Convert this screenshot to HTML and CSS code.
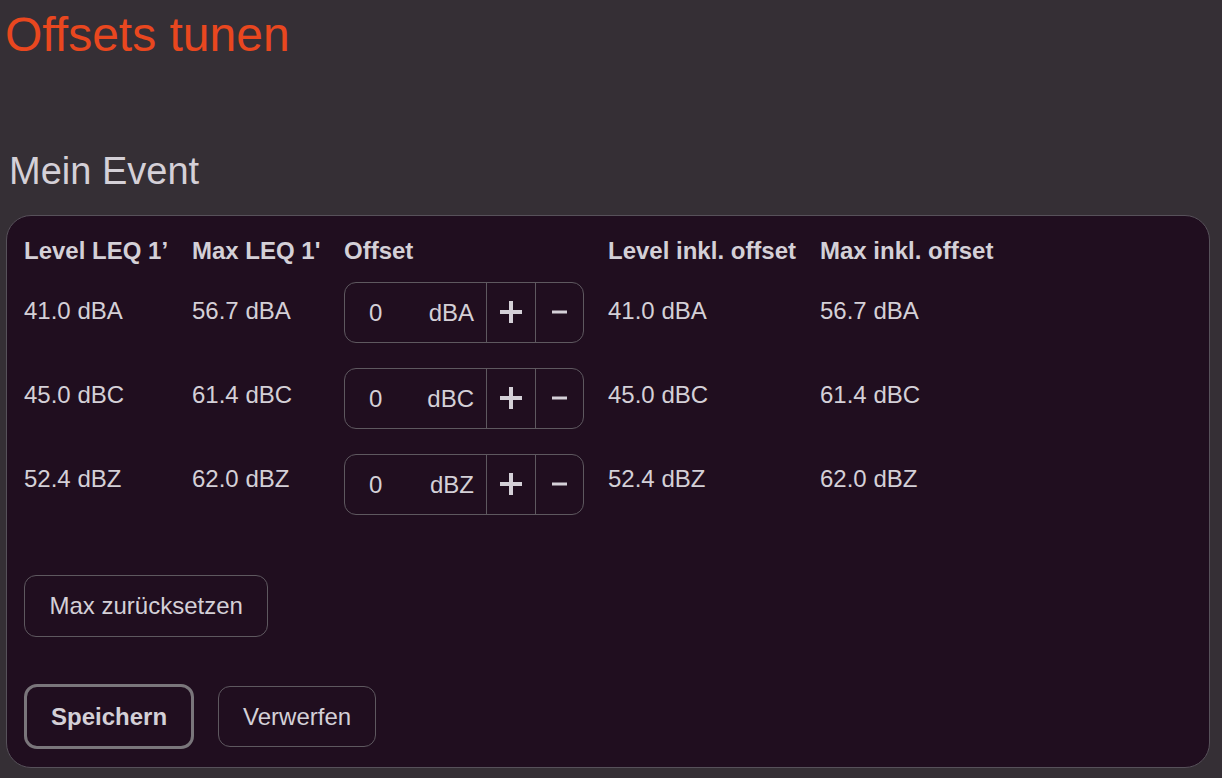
FILE: index.html
```html
<!DOCTYPE html>
<html lang="de">
<head>
<meta charset="utf-8">
<title>Offsets tunen</title>
<link rel="stylesheet" href="styles.css">
</head>
<body>
<main class="page">
  <h1 class="title">Offsets tunen</h1>
  <h2 class="event">Mein Event</h2>
  <section class="card">
    <div class="table">
      <div class="col col-level">
        <div class="th">Level LEQ 1’</div>
        <div class="td">41.0 dBA</div>
        <div class="td">45.0 dBC</div>
        <div class="td">52.4 dBZ</div>
      </div>
      <div class="col col-max">
        <div class="th">Max LEQ 1'</div>
        <div class="td">56.7 dBA</div>
        <div class="td">61.4 dBC</div>
        <div class="td">62.0 dBZ</div>
      </div>
      <div class="col col-offset">
        <div class="th">Offset</div>
        <div class="td-input">
          <div class="group">
            <input class="num" type="text" value="0">
            <span class="suffix">dBA</span>
            <button class="step" aria-label="plus"><svg width="22" height="22" viewBox="0 0 22 22"><path d="M0 11H22M11 0V22" stroke="currentColor" stroke-width="4"/></svg></button>
            <button class="step" aria-label="minus"><svg width="15" height="4" viewBox="0 0 15 4"><path d="M0 2H15" stroke="currentColor" stroke-width="3"/></svg></button>
          </div>
        </div>
        <div class="td-input">
          <div class="group">
            <input class="num" type="text" value="0">
            <span class="suffix">dBC</span>
            <button class="step" aria-label="plus"><svg width="22" height="22" viewBox="0 0 22 22"><path d="M0 11H22M11 0V22" stroke="currentColor" stroke-width="4"/></svg></button>
            <button class="step" aria-label="minus"><svg width="15" height="4" viewBox="0 0 15 4"><path d="M0 2H15" stroke="currentColor" stroke-width="3"/></svg></button>
          </div>
        </div>
        <div class="td-input">
          <div class="group">
            <input class="num" type="text" value="0">
            <span class="suffix">dBZ</span>
            <button class="step" aria-label="plus"><svg width="22" height="22" viewBox="0 0 22 22"><path d="M0 11H22M11 0V22" stroke="currentColor" stroke-width="4"/></svg></button>
            <button class="step" aria-label="minus"><svg width="15" height="4" viewBox="0 0 15 4"><path d="M0 2H15" stroke="currentColor" stroke-width="3"/></svg></button>
          </div>
        </div>
      </div>
      <div class="col col-level-off">
        <div class="th">Level inkl. offset</div>
        <div class="td">41.0 dBA</div>
        <div class="td">45.0 dBC</div>
        <div class="td">52.4 dBZ</div>
      </div>
      <div class="col col-max-off">
        <div class="th">Max inkl. offset</div>
        <div class="td">56.7 dBA</div>
        <div class="td">61.4 dBC</div>
        <div class="td">62.0 dBZ</div>
      </div>
    </div>
    <div class="reset-row">
      <button class="btn">Max zurücksetzen</button>
    </div>
    <div class="actions">
      <button class="btn btn-primary">Speichern</button>
      <button class="btn">Verwerfen</button>
    </div>
  </section>
</main>
</body>
</html>
```

FILE: styles.css
```css
* {
  box-sizing: border-box;
}

html, body {
  margin: 0;
  padding: 0;
  background: #352f35;
}

body {
  font-family: "Liberation Sans", Arial, sans-serif;
  font-size: 24px;
  color: #d4d0d7;
}

.page {
  padding: 7px 12px 0 6px;
}

.title {
  margin: 0 0 0 -1px;
  font-size: 48px;
  line-height: 56px;
  font-weight: normal;
  color: #e9471f;
}

.event {
  margin: 86px 0 0 3px;
  font-size: 38px;
  line-height: 44px;
  font-weight: normal;
  color: #d4d0d7;
}

.card {
  margin-top: 22px;
  background: #200e1f;
  border: 1px solid #57515a;
  border-radius: 25px;
  padding: 17px 17px 18px 17px;
}

.table {
  display: flex;
  gap: 24px;
  align-items: flex-start;
}

.col {
  display: flex;
  flex-direction: column;
}

.col-level { width: 144px; }
.col-max { width: 128px; }
.col-offset { width: 240px; }
.col-level-off { width: 188px; }
.col-max-off { width: 188px; }

.th {
  font-weight: bold;
  line-height: 36px;
  white-space: nowrap;
}

.td {
  line-height: 36px;
  padding: 24px 0;
  white-space: nowrap;
}

.td-input {
  padding: 12.5px 0;
}

.group {
  display: flex;
  align-items: stretch;
  height: 61px;
  border: 1px solid #5e585f;
  border-radius: 12px;
  overflow: hidden;
}

.num {
  flex: 1;
  min-width: 0;
  border: none;
  outline: none;
  background: transparent;
  color: #d4d0d7;
  font-family: "Liberation Sans", Arial, sans-serif;
  font-size: 24px;
  padding: 1px 0 0 24px;
  margin: 0;
}

.suffix {
  display: flex;
  align-items: center;
  padding: 1px 12px 0 0;
  color: #d4d0d7;
}

.step {
  display: flex;
  align-items: center;
  justify-content: center;
  flex: none;
  width: 49px;
  padding: 0;
  margin: 0;
  border: none;
  border-left: 1px solid #5e585f;
  background: transparent;
  color: #d4d0d7;
}

.step:last-child {
  width: 48px;
}

.reset-row {
  margin-top: 48px;
  display: flex;
}

.actions {
  margin-top: 47px;
  display: flex;
  align-items: center;
  gap: 24px;
}

.btn {
  height: 62px;
  padding: 0 24.5px;
  border: 1px solid #5e585f;
  border-radius: 12px;
  background: transparent;
  color: #d4d0d7;
  font-family: "Liberation Sans", Arial, sans-serif;
  font-size: 24px;
  margin: 0;
}

.actions .btn {
  height: 61px;
  padding: 0 24px;
}

.actions .btn-primary {
  height: 65px;
  padding: 0 24px;
  border: 3px solid #7a767b;
  border-radius: 13px;
  font-weight: bold;
}
```
